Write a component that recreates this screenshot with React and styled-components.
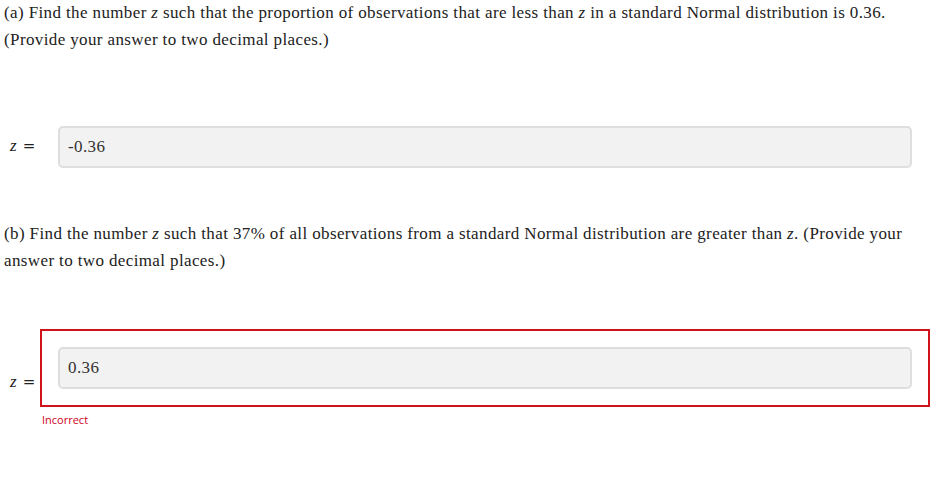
import React from "react";
import styled, { createGlobalStyle } from "styled-components";

const Global = createGlobalStyle`
  html, body { margin: 0; padding: 0; background: #fff; }
  body { font-family: "Liberation Serif", "Times New Roman", serif; color: #222; }
`;

const Page = styled.div`
  width: 926px;
  padding: 0 0 0 4px;
  display: flex;
  flex-direction: column;
`;

const Question = styled.p`
  margin: ${(p) => (p.$first ? "0" : "35px")} 0 0 0;
  font-size: 17px;
  letter-spacing: 0.38px;
  line-height: 26.67px;
`;

const Var = styled.i`
  font-style: italic;
`;

const AnswerRow = styled.div`
  display: flex;
  align-items: flex-start;
  margin-top: ${(p) => p.$gap}px;
`;

const Label = styled.div`
  width: 36px;
  box-sizing: border-box;
  padding: ${(p) => p.$offset}px 0 0 6px;
  display: flex;
  align-items: baseline;
  gap: 6px;
  line-height: 20px;
  white-space: nowrap;
`;

const MathZ = styled.span`
  font-family: "Liberation Serif", serif;
  font-style: italic;
  font-size: 17px;
`;

const MathEq = styled.span`
  font-family: "DejaVu Serif", serif;
  font-size: 15px;
`;

const FieldWrap = styled.div`
  flex: 1;
  display: flex;
  flex-direction: column;
`;

const FieldBox = styled.div`
  border: 2px solid ${(p) => (p.$incorrect ? "#d0121b" : "transparent")};
  padding: 16px;
`;

const Input = styled.div`
  box-sizing: border-box;
  height: 42px;
  border: 2px solid #dedede;
  border-radius: 5px;
  background: #f2f2f2;
  padding: 0 8px;
  display: flex;
  align-items: center;
  font-family: "Liberation Serif", serif;
  font-size: 17px;
  letter-spacing: 0.4px;
  color: #333;
`;

const Feedback = styled.div`
  margin-top: 6px;
  padding-left: 2px;
  font-family: "Open Sans", sans-serif;
  font-size: 11px;
  line-height: 14px;
  color: #d0021b;
`;

function Answer({ value, incorrect, offset, gap }) {
  return (
    <AnswerRow $gap={gap}>
      <Label $offset={offset}>
        <MathZ>z</MathZ>
        <MathEq>=</MathEq>
      </Label>
      <FieldWrap>
        <FieldBox $incorrect={incorrect}>
          <Input>{value}</Input>
        </FieldBox>
        {incorrect && <Feedback>Incorrect</Feedback>}
      </FieldWrap>
    </AnswerRow>
  );
}

export default function App() {
  return (
    <>
      <Global />
      <Page>
        <Question $first>
          (a) Find the number <Var>z</Var> such that the proportion of observations that are less than{" "}
          <Var>z</Var> in a standard Normal distribution is 0.36. (Provide your answer to two decimal places.)
        </Question>
        <Answer value="-0.36" offset={28} gap={55} />
        <Question>
          (b) Find the number <Var>z</Var> such that 37% of all observations from a standard Normal distribution are
          greater than <Var>z</Var>. (Provide your answer to two decimal places.)
        </Question>
        <Answer value="0.36" incorrect offset={43} gap={54} />
      </Page>
    </>
  );
}
